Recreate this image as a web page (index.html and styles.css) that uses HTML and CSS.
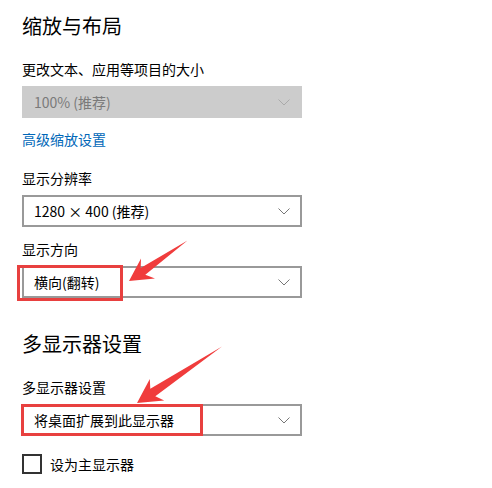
FILE: index.html
```html
<!DOCTYPE html>
<html lang="zh-CN">
<head>
  <meta charset="UTF-8" />
  <title>显示设置</title>
  <link rel="stylesheet" href="styles.css">
</head>
<body>
  <div class="page">
    <h2 class="section-title">缩放与布局</h2>
    <div class="field-label first">更改文本、应用等项目的大小</div>
    <div class="select disabled">
      <span>100% (推荐)</span>
      <svg class="chevron" width="12" height="7" viewBox="0 0 12 7"><path d="M0.5 0.5 L6 6 L11.5 0.5" fill="none" stroke="#aaa" stroke-width="1"/></svg>
    </div>
    <a class="link" href="#">高级缩放设置</a>

    <div class="field-label">显示分辨率</div>
    <div class="select">
      <span>1280 × 400 (推荐)</span>
      <svg class="chevron" width="12" height="7" viewBox="0 0 12 7"><path d="M0.5 0.5 L6 6 L11.5 0.5" fill="none" stroke="#777" stroke-width="1"/></svg>
    </div>

    <div class="field-label near">显示方向</div>
    <div class="select">
      <span>横向(翻转)</span>
      <svg class="chevron" width="12" height="7" viewBox="0 0 12 7"><path d="M0.5 0.5 L6 6 L11.5 0.5" fill="none" stroke="#777" stroke-width="1"/></svg>
      <div class="mark mark-orient"></div>
    </div>

    <h2 class="section-title second">多显示器设置</h2>
    <div class="field-label">多显示器设置</div>
    <div class="select">
      <span>将桌面扩展到此显示器</span>
      <svg class="chevron" width="12" height="7" viewBox="0 0 12 7"><path d="M0.5 0.5 L6 6 L11.5 0.5" fill="none" stroke="#777" stroke-width="1"/></svg>
      <div class="mark mark-multi"></div>
    </div>

    <label class="check">
      <span class="box"></span>
      <span>设为主显示器</span>
    </label>

    <!-- annotation arrows -->
    <svg class="arrows" width="492" height="488" viewBox="0 0 492 488">
      <polygon fill="#f03c3c" points="129,281 141,258.6 140.7,268.1 187.5,240.5 145.3,274.7 155,278.4"/>
      <polygon fill="#f03c3c" points="137,403 149.8,378.9 150.3,388.8 222,346.5 155.3,396.2 164.2,400.5"/>
    </svg>
  </div>
</body>
</html>
```

FILE: styles.css
```css
body {
  margin: 0;
  padding: 0;
  background: #fff;
  color: #000;
  font-family: "Microsoft YaHei", "Noto Sans CJK SC", sans-serif;
}

.page {
  position: relative;
  width: 492px;
  height: 488px;
  padding: 12px 0 0 22px;
  box-sizing: border-box;
  overflow: hidden;
}

.section-title {
  margin: 0;
  font-size: 20px;
  font-weight: normal;
  line-height: 28px;
}

.section-title.second {
  margin-top: 32px;
}

.field-label {
  font-size: 14px;
  line-height: 20px;
  margin: 19px 0 7px;
}

.field-label.near {
  margin-top: 12px;
}

.select {
  position: relative;
  width: 280px;
  height: 32px;
  box-sizing: border-box;
  border: 2px solid #999;
  display: flex;
  align-items: center;
  justify-content: space-between;
  padding: 0 10px 0 10px;
  font-size: 14px;
}

.select.disabled {
  border-color: #ccc;
  background: #ccc;
  color: #7a7a7a;
}

.chevron {
  display: block;
}

.link {
  display: block;
  margin-top: 11px;
  font-size: 14px;
  line-height: 20px;
  color: #0067b8;
  text-decoration: none;
}

.check {
  display: flex;
  align-items: center;
  gap: 8px;
  margin-top: 18px;
  font-size: 14px;
}

.check .box {
  width: 20px;
  height: 20px;
  box-sizing: border-box;
  border: 2px solid #333;
}

.mark {
  position: absolute;
  border: 3px solid #e8403f;
}

.mark-orient {
  left: -7px;
  top: -3px;
  width: 100px;
  height: 30px;
}

.mark-multi {
  left: -3px;
  top: -2px;
  width: 176px;
  height: 26px;
}

.arrows {
  position: absolute;
  left: 0;
  top: 0;
  pointer-events: none;
}
```
